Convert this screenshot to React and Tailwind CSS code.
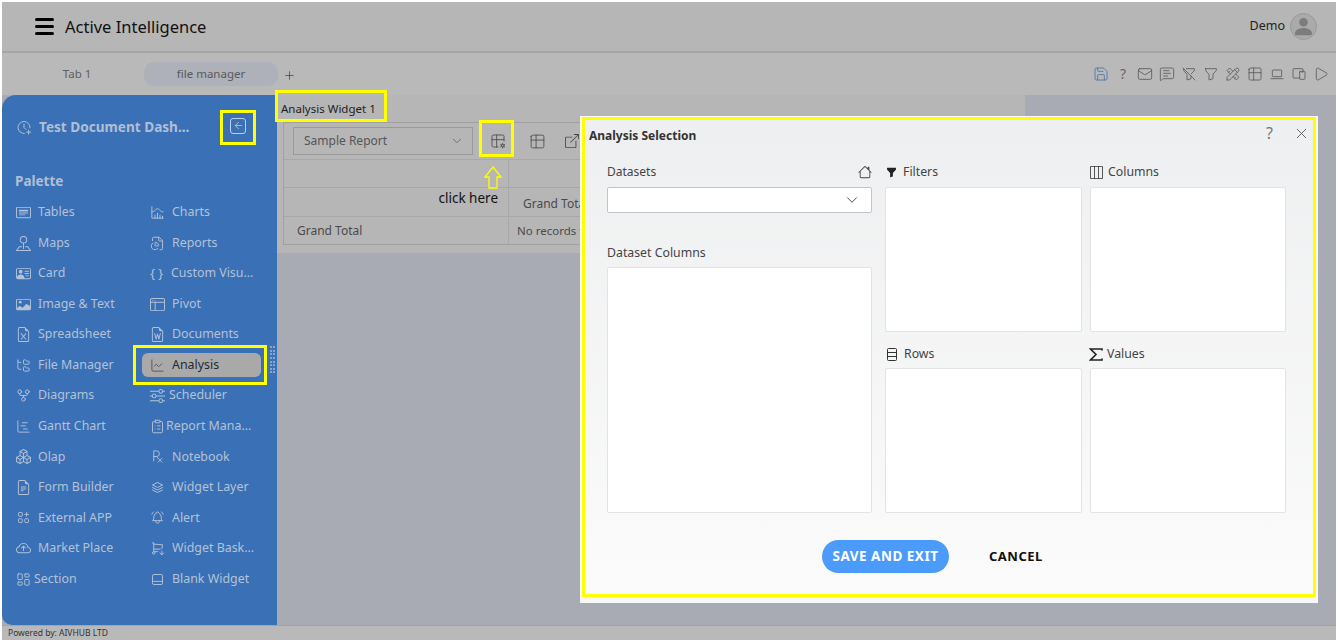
import { ArrowLeft, ChartGantt, ChartLine, ChevronDown, FileChartPie, FolderTree, GitFork, LayoutDashboard, Mail, MessageSquareText, Play, Plus, Save, X, ClipboardList } from "lucide-react";
import {
  BsBoxes, BsBoxArrowUpRight, BsCardHeading, BsCardImage, BsCloudArrowUp, BsFileEarmarkExcel, BsFileEarmarkText,
  BsFileEarmarkWord, BsFunnelFill, BsHouse, BsLayoutThreeColumns, BsPersonFill, BsPersonVcard, BsPinMap, BsSliders,
  BsWindowSidebar,
} from "react-icons/bs";
import {
  TbApps, TbBellRinging, TbChartHistogram, TbClockPlus, TbDeviceLaptop, TbDevices, TbFilter, TbFilterOff,
  TbLayoutBottombar, TbPrescription, TbShoppingCartDown, TbStack2, TbTable, TbTableOptions, TbTools,
} from "react-icons/tb";

const leftItems = [
  [BsCardHeading, "Tables", "w-[22px]"],
  [BsPinMap, "Maps", "w-[22px]"],
  [BsPersonVcard, "Card", "w-[22px]"],
  [BsCardImage, "Image & Text", "w-[22px]"],
  [BsFileEarmarkExcel, "Spreadsheet", "w-[22px]"],
  [FolderTree, "File Manager", "w-[22px]"],
  [GitFork, "Diagrams", "w-[22px]"],
  [ChartGantt, "Gantt Chart", "w-[22px]"],
  [BsBoxes, "Olap", "w-[22px]"],
  [BsFileEarmarkText, "Form Builder", "w-[22px]"],
  [TbApps, "External APP", "w-[22px]"],
  [BsCloudArrowUp, "Market Place", "w-[22px]"],
  [LayoutDashboard, "Section", "w-[18px]"],
];

const rightItems = [
  [TbChartHistogram, "Charts", "w-[22px]"],
  [FileChartPie, "Reports", "w-[22px]"],
  [null, "Custom Visu...", "w-[21px]"],
  [BsWindowSidebar, "Pivot", "w-[22px]"],
  [BsFileEarmarkWord, "Documents", "w-[22px]"],
  [ChartLine, "Analysis", "w-[22px]"],
  [BsSliders, "Scheduler", "w-[19px]"],
  [ClipboardList, "Report Mana...", "w-[16px]"],
  [TbPrescription, "Notebook", "w-[22px]"],
  [TbStack2, "Widget Layer", "w-[22px]"],
  [TbBellRinging, "Alert", "w-[22px]"],
  [TbShoppingCartDown, "Widget Bask...", "w-[22px]"],
  [TbLayoutBottombar, "Blank Widget", "w-[22px]"],
];

// bootstrap icons are filled shapes, they need strokeWidth 0
const filledIcons = new Set([
  BsCardHeading, BsPinMap, BsPersonVcard, BsCardImage, BsFileEarmarkExcel, BsBoxes, BsFileEarmarkText, BsCloudArrowUp,
  BsWindowSidebar, BsFileEarmarkWord, BsSliders,
]);

const toolbarIcons = [Save, null, Mail, MessageSquareText, TbFilterOff, TbFilter, TbTools, TbTable, TbDeviceLaptop, TbDevices, Play];

function PaletteItem({ icon: Icon, label, width, active }) {
  return (
    <div
      className={
        "flex items-center h-[24px] rounded-md text-[12.4px] " +
        (active ? "bg-[#a9a9a9] text-[#1f2937] -ml-[8px] pl-[8px] w-[119px]" : "text-[#b4c2d8]")
      }
    >
      <span className={"shrink-0 " + width}>
        {Icon ? (
          <Icon size={15} strokeWidth={filledIcons.has(Icon) ? 0 : 1.5} className={active ? "text-[#555]" : ""} />
        ) : (
          <span className="block text-[13px] leading-[15px]">{"{ }"}</span>
        )}
      </span>
      <span className="whitespace-nowrap">{label}</span>
    </div>
  );
}

function DropBox({ icon, label, labelClass }) {
  return (
    <div className="flex flex-col">
      <div className={"flex items-center text-[12.3px] text-[#444] " + labelClass}>
        {icon}
        <span>{label}</span>
      </div>
      <div className="flex-1 bg-white border border-[#e3e3e3] rounded-[2px]" />
    </div>
  );
}

export default function App() {
  return (
    <div
      className="relative w-[1338px] h-[643px] overflow-hidden bg-white pt-[2px] pl-[2px] pr-[2px] pb-[3px] flex flex-col"
      style={{ fontFamily: '"Noto Sans", "Open Sans", sans-serif' }}
    >
      <header className="h-[51px] shrink-0 bg-[#b6b6b6] border-b-2 border-[#a5a5a5] flex items-center pl-[33px] pr-[19px]">
        <div className="w-[19px] flex flex-col gap-[4px] mr-[11px]">
          <span className="h-[3px] bg-black rounded-sm" />
          <span className="h-[3px] bg-black rounded-sm" />
          <span className="h-[3px] bg-black rounded-sm" />
        </div>
        <span className="text-[16.5px] text-[#111] pt-[2px]">Active Intelligence</span>
        <div className="ml-auto flex items-center gap-[5px]">
          <span className="text-[12.5px] text-[#222]">Demo</span>
          <span className="w-[27px] h-[27px] rounded-full border border-[#999] bg-[#aaa] flex items-center justify-center overflow-hidden">
            <BsPersonFill size={23} className="text-[#7c7c7c]" />
          </span>
        </div>
      </header>

      <div className="h-[42px] shrink-0 bg-[#b9b9b9] flex items-center">
        <span className="w-[142px] pl-[8px] text-center text-[11.5px] text-[#5f5f5f]">Tab 1</span>
        <span className="w-[134px] h-[24px] rounded-[10px] bg-[#aeb1b9] flex items-center justify-center text-[11.5px] text-[#5a5a5a]">
          file manager
        </span>
        <Plus size={13} strokeWidth={1.2} className="ml-[5px] mt-[2px] text-[#333]" />
        <div className="ml-auto flex items-center gap-[6px] pr-[7px]">
          {toolbarIcons.map((Icon, i) =>
            Icon ? (
              <Icon key={i} size={16} strokeWidth={1.2} className={i === 0 ? "text-[#3f6fa8]" : "text-[#555]"} />
            ) : (
              <span key={i} className="w-[16px] text-center text-[14px] leading-[16px] text-[#666]">?</span>
            )
          )}
        </div>
      </div>

      <div className="flex flex-1 min-h-0 bg-[#a8abb3]">
        <aside className="w-[275px] shrink-0 bg-[#3a70b5] rounded-tl-[14px] rounded-bl-[10px] pl-[14px] pt-[20px]">
          <div className="flex items-center h-[24px] text-[#b0bfd6]">
            <TbClockPlus size={17} strokeWidth={1.5} className="w-[16px]" />
            <span className="ml-[7px] w-[150px] text-[13.6px] font-bold whitespace-nowrap">Test Document Dash...</span>
            <span className="ml-[41px] -mt-[3px] w-[16px] h-[16px] border border-[#c3cfe0] rounded-[3px] flex items-center justify-center">
              <ArrowLeft size={11} strokeWidth={2} />
            </span>
          </div>
          <div className="mt-[32px] text-[13.5px] font-bold text-[#b0bfd6] -ml-[1px]">Palette</div>
          <div className="mt-[6px] grid grid-cols-[134px_1fr] auto-rows-[30.55px] items-center">
            {leftItems.map((it, i) => (
              <div key={it[1]} className="contents">
                <PaletteItem icon={it[0]} label={it[1]} width={it[2]} />
                <PaletteItem icon={rightItems[i][0]} label={rightItems[i][1]} width={rightItems[i][2]} active={rightItems[i][1] === "Analysis"} />
              </div>
            ))}
          </div>
        </aside>

        <main className="flex-1 min-w-0 flex">
          <div className="w-[748px] h-[158px] shrink-0 bg-[#b6b6b6] pl-[4px]">
            <div className="h-[27px] flex items-center text-[11.5px] text-[#222]">Analysis Widget 1</div>
            <div className="ml-[2px] w-[400px] h-[123px] border border-[#a0a0a0] text-[12px] text-[#4a4a4a]">
              <div className="h-[37px] border-b border-[#a8a8a8] flex items-center pl-[9px]">
                <div className="w-[180px] h-[28px] border border-[#9a9a9a] flex items-center justify-between pl-[10px] pr-[8px] text-[12px] text-[#555]">
                  Sample Report
                  <ChevronDown size={14} strokeWidth={1.2} />
                </div>
                <TbTableOptions size={16} strokeWidth={1.3} className="ml-[17px]" />
                <TbTable size={17} strokeWidth={1.2} className="ml-[23px]" />
                <BsBoxArrowUpRight size={14} className="ml-[19px]" />
              </div>
              <div className="grid grid-cols-[225px_1fr] grid-rows-[28px_29px_28px]">
                <div className="border-b border-r border-[#a8a8a8]" />
                <div className="border-b border-[#a8a8a8]" />
                <div className="border-b border-r border-[#a8a8a8]" />
                <div className="border-b border-[#a8a8a8] pl-[14px] pt-[7px] whitespace-nowrap">Grand Total</div>
                <div className="border-r border-[#a8a8a8] pl-[13px] flex items-center">Grand Total</div>
                <div className="pl-[8px] flex items-center whitespace-nowrap text-[11.5px]">No records to display</div>
              </div>
            </div>
          </div>
        </main>
      </div>

      <footer className="h-[15px] shrink-0 bg-[#b9b9b9] border-t border-[#a5a5a5] pl-[6px] text-[8.5px] leading-[14px] text-[#333]">
        Powered by: AIVHUB LTD
      </footer>

      {/* annotations laid over the greyed page */}
      <div className="absolute left-[275px] top-[90px] w-[112px] h-[32px] border-[3px] border-[#ffff00]" />
      <div className="absolute left-[220px] top-[110px] w-[36px] h-[35px] border-[3px] border-[#ffff00]" />
      <div className="absolute left-[133px] top-[345px] w-[134px] h-[40px] border-[3px] border-[#ffff00]" />
      <div className="absolute left-[479px] top-[120px] w-[35px] h-[37px] border-[3px] border-[#ffff00]" />
      <svg className="absolute left-[483px] top-[166px]" width="20" height="23" viewBox="0 0 20 23" fill="none" stroke="#ffff00" strokeWidth="1.3">
        <path d="M10 1 L18 11 L14 11 L14 22 L6 22 L6 11 L2 11 Z" />
      </svg>
      <span className="absolute right-[840px] top-[188px] text-[13.5px] text-[#111]">click here</span>
      <div className="absolute left-[270px] top-[346px] w-[5px] h-[28px] grid grid-cols-2 gap-[1px]">
        {Array.from({ length: 16 }).map((_, i) => (
          <span key={i} className="w-[2px] h-[2px] bg-[#8da6c8]" />
        ))}
      </div>

      {/* dialog */}
      <div className="absolute left-[580px] top-[116px] w-[738px] h-[487px] bg-[#f7f7f7] pl-[2px] pt-[1px] pr-[2px] pb-[6px]">
        <div className="h-full border-[3px] border-[#ffff00] bg-linear-to-b from-[#eeeff0] to-[#fbfbfb] flex flex-col">
          <div className="h-[30px] flex items-center pl-[4px] pt-[2px] pr-[3px]">
            <span className="text-[12px] font-bold text-[#333]">Analysis Selection</span>
            <span className="ml-auto -mt-[6px] text-[16px] text-[#777]">?</span>
            <X size={17} strokeWidth={1.1} className="ml-[20px] -mt-[6px] text-[#444]" />
          </div>
          <div className="flex pl-[22px] pr-[27px] h-[363px]">
            <div className="w-[265px] flex flex-col">
              <div className="flex items-center justify-between h-[37px] pt-[6px] text-[12px] text-[#444]">
                Datasets
                <BsHouse size={14} />
              </div>
              <div className="h-[26px] bg-white border border-[#c4c4c4] rounded-[2px] flex items-center justify-end pr-[10px]">
                <ChevronDown size={18} strokeWidth={1.3} className="text-[#444]" />
              </div>
              <div className="mt-[31px] h-[23px] text-[12.3px] text-[#444]">Dataset Columns</div>
              <div className="flex-1 bg-white border border-[#e3e3e3] rounded-[2px]" />
            </div>
            <div className="ml-[13px] flex-1 grid grid-cols-[197px_196px] gap-x-[8px] grid-rows-[182px_181px]">
              <DropBox label="Filters" labelClass="h-[37px] pt-[7px] gap-[6px] pl-[1px]" icon={<BsFunnelFill size={11} className="text-[#222]" />} />
              <DropBox label="Columns" labelClass="h-[37px] pt-[7px] gap-[5px]" icon={<BsLayoutThreeColumns size={13} className="text-[#333]" />} />
              <DropBox
                label="Rows"
                labelClass="h-[36px] pt-[8px] gap-[7px] pl-[2px]"
                icon={
                  <svg width="10" height="13" viewBox="0 0 10 13" fill="none" stroke="#333" strokeWidth="1">
                    <rect x="0.5" y="0.5" width="9" height="12" rx="1" />
                    <path d="M0.5 4.5H9.5M0.5 8.5H9.5" />
                  </svg>
                }
              />
              <DropBox
                label="Values"
                labelClass="h-[36px] pt-[8px] gap-[4px] -ml-[1px]"
                icon={
                  <svg width="14" height="13" viewBox="0 0 14 13" fill="none" stroke="#222" strokeWidth="1.6">
                    <path d="M13 2.5V1H1.5L7 6.5L1.5 12H13V10.5" />
                  </svg>
                }
              />
            </div>
          </div>
          <div className="flex items-center mt-[27px] pl-[237px]">
            <button className="w-[127px] h-[33px] rounded-full bg-[#4b9bfa] text-white text-[13.5px] font-bold tracking-[0.5px]">SAVE AND EXIT</button>
            <button className="ml-[40px] pt-[1px] text-[13px] font-bold tracking-[0.5px] text-[#111]">CANCEL</button>
          </div>
        </div>
      </div>
    </div>
  );
}
